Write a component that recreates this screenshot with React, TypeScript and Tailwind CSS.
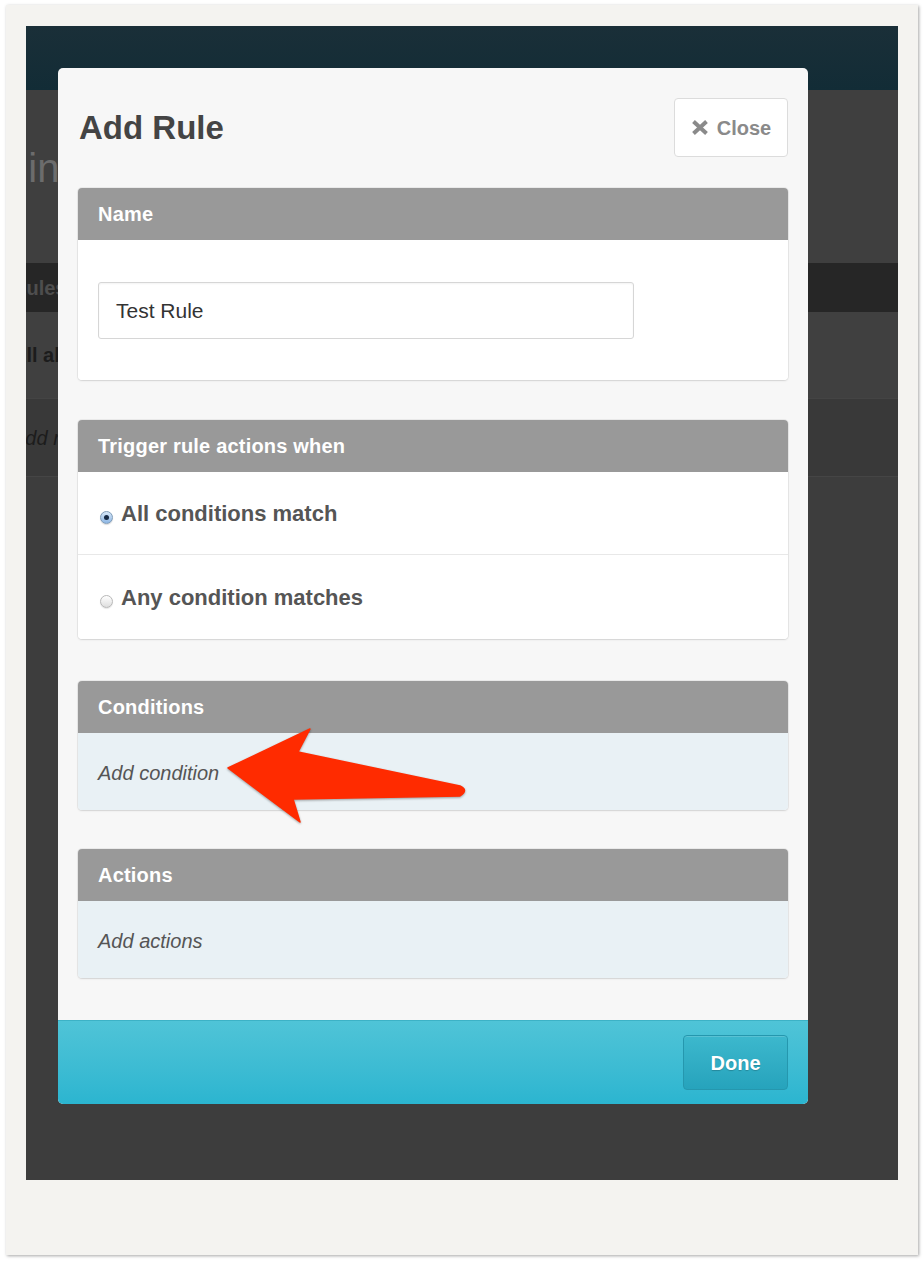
import React from "react";

function Radio({ checked }: { checked: boolean }) {
  return checked ? (
    <span className="ml-[2px] mt-[9px] mr-[8px] flex h-[13px] w-[13px] shrink-0 items-center justify-center rounded-full border border-[#7f9cb8] bg-gradient-to-b from-[#d8e8f8] to-[#8db6e4] shadow-[0_1px_1px_rgba(0,0,0,0.15)]">
      <span className="h-[5px] w-[5px] rounded-full bg-[#172a44]" />
    </span>
  ) : (
    <span className="ml-[2px] mt-[9px] mr-[8px] h-[13px] w-[13px] shrink-0 rounded-full border border-[#b8b8b8] bg-gradient-to-b from-white to-[#dedede] shadow-[0_1px_1px_rgba(0,0,0,0.1)]" />
  );
}

function PanelHeader({ title }: { title: string }) {
  return (
    <div className="flex h-[52px] items-center bg-[#999999] px-[20px] text-[20px] font-bold tracking-[0.2px] text-white">
      {title}
    </div>
  );
}

export default function App() {
  return (
    <div className="relative h-[1261px] w-[924px] overflow-hidden bg-white font-['Liberation_Sans',Arial,sans-serif]">
      <div className="ml-[6px] mt-[5px] h-[1250px] w-[912px] bg-[#f4f3f0] px-[20px] pt-[21px] shadow-[1px_1px_3px_rgba(0,0,0,0.35)]">
        <div className="relative h-[1154px] w-[872px] overflow-hidden bg-[#3d3d3d]">
          {/* dimmed application behind the dialog */}
          <div className="h-[64px] bg-gradient-to-b from-[#1a2f38] to-[#122c36]" />
          <div className="h-[173px] bg-[#3f3f3f] pt-[54px]">
            <div className="ml-[-80px] whitespace-nowrap text-[40px] leading-[48px] text-[#6c6c6c]">
              Administration
            </div>
          </div>
          <div className="flex h-[49px] items-center bg-[#262626]">
            <span className="ml-[-14px] whitespace-nowrap text-[20px] font-bold text-[#4e4e4e]">Rules</span>
          </div>
          <div className="flex h-[86px] items-center bg-[#404040]">
            <span className="ml-[-14px] whitespace-nowrap text-[20px] font-bold text-[#1c1c1c]">All about rules</span>
          </div>
          <div className="flex h-[78px] items-center border-t border-[#444444] bg-[#393939]">
            <span className="ml-[-14px] whitespace-nowrap text-[20px] italic text-[#1c1c1c]">Add rule</span>
          </div>
          <div className="h-px bg-[#454545]" />

          {/* dialog */}
          <div className="absolute left-[32px] top-[42px] flex h-[1036px] w-[750px] flex-col overflow-hidden rounded-[5px] bg-[#f7f7f7]">
            <div className="px-[20px]">
              <div className="flex items-center justify-between pt-[30px]">
                <h1 className="pl-[1px] text-[33px] font-bold text-[#444444]">Add Rule</h1>
                <div className="flex h-[59px] w-[114px] items-center justify-center gap-[8px] rounded-[4px] border border-[#dcdcdc] bg-white text-[20px] font-bold text-[#8a8a8a]">
                  <svg width="18" height="17" viewBox="0 0 18 17">
                    <path d="M2.5 2.5 L15.5 14.5 M15.5 2.5 L2.5 14.5" stroke="#8a8a8a" strokeWidth="4" strokeLinecap="butt" />
                  </svg>
                  <span>Close</span>
                </div>
              </div>

              {/* Name */}
              <div className="mt-[31px] overflow-hidden rounded-[4px] shadow-[0_0_0_1px_rgba(0,0,0,0.05),0_1px_2px_rgba(0,0,0,0.1)]">
                <PanelHeader title="Name" />
                <div className="bg-white px-[20px] pb-[41px] pt-[42px]">
                  <div className="flex h-[57px] w-[536px] items-center rounded-[3px] border border-[#d6d6d6] px-[17px] text-[21px] text-[#333333] shadow-[inset_0_1px_2px_rgba(0,0,0,0.05)]">
                    Test Rule
                  </div>
                </div>
              </div>

              {/* Trigger */}
              <div className="mt-[40px] overflow-hidden rounded-[4px] shadow-[0_0_0_1px_rgba(0,0,0,0.05),0_1px_2px_rgba(0,0,0,0.1)]">
                <PanelHeader title="Trigger rule actions when" />
                <div className="bg-white">
                  <div className="flex h-[83px] items-center border-b border-[#e8e8e8] px-[20px] text-[22px] font-bold text-[#555555]">
                    <Radio checked />
                    <span>All conditions match</span>
                  </div>
                  <div className="flex h-[84px] items-center px-[20px] text-[22px] font-bold text-[#555555]">
                    <Radio checked={false} />
                    <span>Any condition matches</span>
                  </div>
                </div>
              </div>

              {/* Conditions */}
              <div className="mt-[42px] overflow-hidden rounded-[4px] shadow-[0_0_0_1px_rgba(0,0,0,0.05),0_1px_2px_rgba(0,0,0,0.1)]">
                <PanelHeader title="Conditions" />
                <div className="flex h-[77px] items-center bg-[#e9f1f5] px-[20px] pt-[3px] text-[20px] italic text-[#555555]">
                  Add condition
                </div>
              </div>

              {/* Actions */}
              <div className="mt-[39px] overflow-hidden rounded-[4px] shadow-[0_0_0_1px_rgba(0,0,0,0.05),0_1px_2px_rgba(0,0,0,0.1)]">
                <PanelHeader title="Actions" />
                <div className="flex h-[77px] items-center bg-[#e9f1f5] px-[20px] pt-[3px] text-[20px] italic text-[#555555]">
                  Add actions
                </div>
              </div>
            </div>

            <div className="mt-auto flex h-[84px] items-center justify-end border-t border-[#3cb2c6] bg-gradient-to-b from-[#4fc4d7] to-[#2bb5d0] pr-[20px]">
              <div className="flex h-[55px] w-[105px] items-center justify-center rounded-[4px] border border-[#2597ae] bg-gradient-to-b from-[#3cb8cd] to-[#26a3bc] text-[20px] font-bold text-white shadow-[inset_0_1px_0_rgba(255,255,255,0.15)] [text-shadow:0_1px_1px_rgba(0,0,0,0.2)]">
                Done
              </div>
            </div>
          </div>
        </div>
      </div>

      {/* annotation arrow */}
      <svg
        className="pointer-events-none absolute left-0 top-0 drop-shadow-[0_1px_1px_rgba(0,0,0,0.35)]"
        width="924"
        height="1261"
        viewBox="0 0 924 1261"
      >
        <path
          d="M228 768 L310 729 L298 752 L460 786 Q469 790 460 796 L293 799 L300 822 Z"
          fill="#ff2b00"
          stroke="#ff2b00"
          strokeWidth="1.5"
          strokeLinejoin="round"
        />
      </svg>
    </div>
  );
}
